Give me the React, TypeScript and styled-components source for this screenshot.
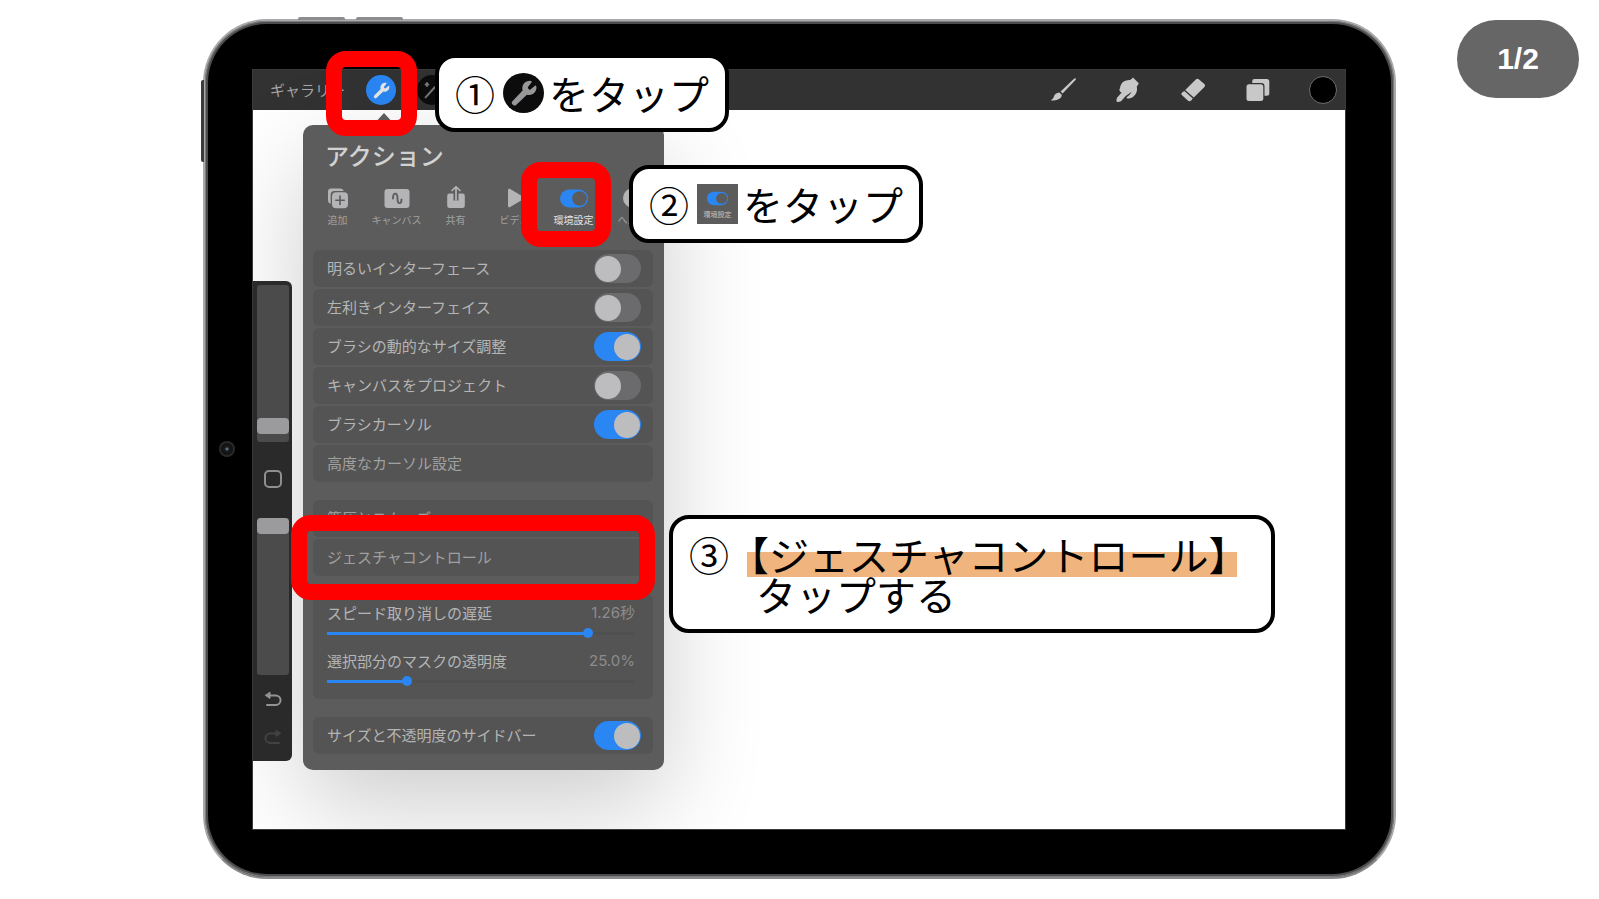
import React from "react";
import styled, { createGlobalStyle, css } from "styled-components";

const GlobalStyle = createGlobalStyle`
  *, *::before, *::after { box-sizing: border-box; }
  body {
    margin: 0;
    background: #fff;
    font-family: "Noto Sans CJK JP", sans-serif;
  }
  button { border: 0; padding: 0; margin: 0; background: none; font: inherit; color: inherit; }
`;

/* ---------- page and tablet ---------- */

const Page = styled.main`
  position: relative;
  min-width: 1500px;
  padding: 19px 203px 20px;
`;

const PageCounter = styled.div`
  position: absolute;
  top: 20px;
  right: 20px;
  width: 122px;
  height: 78px;
  border-radius: 39px;
  background: #666;
  color: #fff;
  font: bold 30px/78px "Liberation Sans", sans-serif;
  text-align: center;
`;

const Tablet = styled.section`
  position: relative;
  padding: 49px 49px 48px 48px;
  border: 2px solid #a9a9ab;
  border-bottom-color: #8a8a8c;
  border-radius: 64px;
  background: #000;
  box-shadow: inset 0 0 0 1px #7c7c7e, inset 0 0 0 3px #4c4c4e;
`;

const HardwareButton = styled.span<{ $side: "top" | "left"; $at: number }>`
  position: absolute;
  background: #8c8c8e;
  ${({ $side, $at }) =>
    $side === "top"
      ? css`
          top: -4px;
          left: ${$at}px;
          width: 47px;
          height: 3px;
          border-radius: 2px 2px 0 0;
        `
      : css`
          left: -4px;
          top: ${$at}px;
          width: 3px;
          height: 82px;
          background: #3c3c3e;
          border-radius: 2px 0 0 2px;
        `}
`;

const Camera = styled.span`
  position: absolute;
  left: 14px;
  top: 420px;
  width: 16px;
  height: 16px;
  border-radius: 50%;
  background: radial-gradient(circle, #5a7080 0 1px, #1d1d1f 2px, #111 5px, #2b2b2d 7px);
`;

const ScreenArea = styled.div`
  position: relative;
`;

const Screen = styled.div`
  background: #fff;
  overflow: hidden;
  box-shadow: 0 0 0 1px #3a3a3a;
`;

/* ---------- top bar ---------- */

const TopBar = styled.header`
  display: flex;
  justify-content: space-between;
  align-items: center;
  height: 40px;
  padding: 0 8px 0 17px;
  background: #323232;
`;

const ToolGroup = styled.div<{ $gap: number }>`
  display: flex;
  align-items: center;
  gap: ${({ $gap }) => $gap}px;
`;

const GalleryButton = styled.button`
  font-size: 15px;
  line-height: 24px;
  color: #a6a6a6;
`;

const RoundTool = styled.button<{ $color: string }>`
  display: grid;
  place-items: center;
  width: 30px;
  height: 30px;
  border-radius: 50%;
  background: ${({ $color }) => $color};
  color: #e6e6e6;
`;

const ToolButton = styled.button`
  display: grid;
  place-items: center;
  width: 28px;
  height: 28px;
  color: #c8c8c8;
`;

const ColorWell = styled(ToolButton)`
  border-radius: 50%;
  border: 1px solid #6e6e6e;
  background: #000;
`;

/* ---------- canvas, side bar ---------- */

const Canvas = styled.div`
  display: flex;
  align-items: flex-start;
  gap: 11px;
  padding-bottom: 59px;
`;

const SideBar = styled.aside`
  display: flex;
  flex-direction: column;
  align-items: center;
  width: 39px;
  height: 480px;
  margin-top: 171px;
  padding-top: 4px;
  border-radius: 0 6px 6px 0;
  background: #2a2a2a;
  position: relative;
  z-index: 1;
`;

const VerticalSlider = styled.input`
  appearance: none;
  writing-mode: vertical-lr;
  direction: rtl;
  width: 32px;
  height: 157px;
  margin: 0;
  border-radius: 3px;
  background: #4b4b4b;
  &::-webkit-slider-thumb {
    appearance: none;
    width: 32px;
    height: 16px;
    border-radius: 4px;
    background: #9b9b9d;
  }
`;

const ModifyButton = styled.button`
  width: 18px;
  height: 18px;
  margin: 28px 0 30px;
  border: 2px solid #8f8f8f;
  border-radius: 5px;
`;

const History = styled.div`
  display: flex;
  flex-direction: column;
  margin-top: 5px;
`;

const HistoryButton = styled.button<{ $dim?: boolean }>`
  display: grid;
  place-items: center;
  width: 30px;
  height: 38px;
  color: ${({ $dim }) => ($dim ? "#424242" : "#949494")};
`;

/* ---------- actions popover ---------- */

const Popover = styled.section`
  position: relative;
  width: 361px;
  margin-top: 15px;
  padding: 14px 11px 16px 10px;
  border-radius: 10px;
  background: #5c5c5c;
  box-shadow: 0 36px 100px rgba(0, 0, 0, 0.2);
  &::before {
    content: "";
    position: absolute;
    top: -12px;
    left: 70px;
    border: 11px solid transparent;
    border-top: 0;
    border-bottom: 12px solid #5c5c5c;
  }
`;

const Title = styled.h1`
  margin: 0 0 15px;
  padding-left: 12px;
  font-size: 24px;
  line-height: 32px;
  font-weight: 500;
  color: #d2d2d2;
`;

const Tabs = styled.nav`
  display: grid;
  grid-template-columns: repeat(6, 59px);
  justify-content: center;
  margin: 0 -11px 23px -7px;
`;

const Tab = styled.button<{ $active?: boolean }>`
  display: flex;
  flex-direction: column;
  align-items: center;
  gap: 3px;
  font-size: 10px;
  line-height: 14px;
  white-space: nowrap;
  color: ${({ $active }) => ($active ? "#e4e4e4" : "#a0a0a0")};
  svg { color: #b4b4b6; }
`;

const Groups = styled.div`
  display: flex;
  flex-direction: column;
  gap: 18px;
`;

const Group = styled.div`
  display: flex;
  flex-direction: column;
  gap: 2px;
`;

const rowSurface = css`
  border-radius: 6px;
  background: #545454;
  font-size: 15px;
  color: #b4b4b4;
`;

const ToggleRow = styled.label`
  ${rowSurface}
  display: flex;
  align-items: center;
  justify-content: space-between;
  height: 37px;
  padding: 0 12px 0 14px;
`;

const ToggleLabel = styled.span`
  padding-bottom: 2px;
`;

const LinkRow = styled.button`
  ${rowSurface}
  height: 37px;
  padding: 0 14px 2px;
  text-align: left;
  color: #a0a0a0;
`;

const Switch = styled.input`
  appearance: none;
  display: flex;
  align-items: center;
  width: 47px;
  height: 29px;
  margin: 0;
  padding: 0 1px;
  border-radius: 15px;
  background: #6b6b6d;
  &::before {
    content: "";
    width: 26px;
    height: 26px;
    border-radius: 50%;
    background: #bdbdbf;
  }
  &:checked { background: #2a86f3; justify-content: flex-end; }
`;

const SliderCard = styled.div`
  ${rowSurface}
  display: flex;
  flex-direction: column;
  gap: 4px;
  height: 105px;
  padding: 7px 18px 0 14px;
`;

const SliderField = styled.label`
  display: grid;
  grid-template-columns: 1fr auto;
  align-content: start;
  row-gap: 2px;
  height: 44px;
  line-height: 24px;
`;

const SliderValue = styled.output`
  font-family: Inter, "Noto Sans CJK JP", sans-serif;
  color: #8c8c8c;
`;

const Slider = styled.input`
  appearance: none;
  grid-column: 1 / -1;
  width: 100%;
  height: 12px;
  margin: 0;
  background: linear-gradient(
      to right,
      #2a86f3 var(--fill),
      #505050 var(--fill)
    )
    center / 100% 3px no-repeat;
  &::-webkit-slider-thumb {
    appearance: none;
    width: 10px;
    height: 10px;
    border-radius: 50%;
    background: #2a86f3;
  }
`;

/* ---------- annotations lying over the screen ---------- */

const Highlight = styled.div<{ $x: number; $y: number; $w: number }>`
  position: absolute;
  z-index: 2;
  left: ${({ $x }) => $x}px;
  top: ${({ $y }) => $y}px;
  width: ${({ $w }) => $w}px;
  height: 85px;
  border: 16px solid #f00;
  border-radius: 20px;
  pointer-events: none;
`;

const Callout = styled.div<{ $x: number; $y: number }>`
  position: absolute;
  z-index: 3;
  left: ${({ $x }) => $x}px;
  top: ${({ $y }) => $y}px;
  padding: 15px 16px;
  border: 4px solid #000;
  border-radius: 20px;
  background: #fff;
  color: #000;
  font-size: 40px;
  line-height: 40px;
  white-space: nowrap;
`;

const StepLine = styled.p`
  display: flex;
  align-items: center;
  width: 254px;
  margin: 0;
`;

const WideStep = styled.p`
  display: grid;
  grid-template-columns: 40px 1fr;
  width: 566px;
  margin: 0;
`;

const Marked = styled.span`
  background: linear-gradient(#f0b47e, #f0b47e) 18px 18px / 490px 25px no-repeat;
  margin-bottom: -4px;
  padding-bottom: 4px;
`;

const SecondLine = styled.span`
  grid-column: 2;
  padding-left: 27px;
`;

const WrenchBadge = styled.span`
  display: grid;
  place-items: center;
  width: 42px;
  height: 40px;
  margin: 0 5px 0 8px;
  border-radius: 50%;
  background: #0c0c0c;
  color: #98989a;
`;

const SettingsTile = styled.span`
  display: flex;
  flex-direction: column;
  align-items: center;
  justify-content: center;
  gap: 2px;
  width: 42px;
  height: 40px;
  margin: 0 5px 0 8px;
  background: #5c5c5c;
  color: #c4c4c4;
  font-size: 7px;
  line-height: 10px;
`;

/* ---------- icons ---------- */

const WrenchIcon = ({ size }: { size: number }) => (
  <svg width={size} height={size} viewBox="0 0 24 24" fill="currentColor">
    <path d="M15.2 7.2a1 1 0 0 0 0 1l.9 1a1 1 0 0 0 1 0l3.7-3c.5-.3 1 0 1.1.5a6 6 0 0 1-7.6 6.7l-8.4 7.9a2 2 0 0 1-3-3l8-8.3a6 6 0 0 1 6.7-7.7c.5.1.8.6.5 1.1z" />
  </svg>
);

const WandIcon = () => (
  <svg width="22" height="22" viewBox="0 0 24 24" fill="none" stroke="#777" strokeWidth="2.2" strokeLinecap="round">
    <path d="M5 20L15 9M6.500 4.500v3M5 6h3M18 3v3M19 15v3" />
  </svg>
);

const BrushIcon = () => (
  <svg width="28" height="26" viewBox="0 0 28 26" fill="currentColor">
    <path d="M26.600 1.400c.5.4.3 1-.1 1.500L13.600 16.400l-2-1.900L25 1.700c.5-.4 1.100-.7 1.600-.3z" />
    <path d="M10.400 15.600l2.300 2.200c.4 2.100-1.400 4-4.300 5-2.300.8-4.700.9-6.700.4 1.900-.8 2.500-1.600 3.100-3.400.8-2.300 2.700-4 5.600-4.200z" />
  </svg>
);

const SmudgeIcon = () => (
  <svg width="26" height="26" viewBox="0 0 26 26" fill="currentColor">
    <path d="M17.200 1.200c.5-.5 1-.5 1.500 0l4.600 4.500c.5.500.5 1 .1 1.500l-1.600 2.200c.9 3.800-.3 7.700-3.300 10-1.700 1.400-3.700 2-5.600 2.200-1.200.1-1.700-1.200-.7-1.900 2-1.300 3.400-2.800 4.300-5-2 1.600-3.700 3-5.800 4.300l-4 4.600c-1 1.200-2.400 1.600-4.200 1.400-.9-.1-1-.6-1-1.500 0-1.400.3-2.400 1.200-3.400l4-4.500c-2.200-.6-2.800-2.500-1.800-4.300C5.500 7.600 7 5 9.700 3.900c2-.8 3.900-.9 6-1.200z" />
  </svg>
);

const EraserIcon = () => (
  <svg width="26" height="26" viewBox="0 0 26 26" fill="currentColor">
    <path d="M15.800 2.400c1-1 2.300-1 3.300 0l5.200 4.500c1 .9 1 2 .1 3.100L13.800 20.600 5.200 12.900z" />
    <path d="M4.300 13.900l8.500 7.700-1.600 1.800c-1 1-2.400 1-3.400.1l-5.700-5.200c-1-.9-1-2 0-2.900z" />
  </svg>
);

const LayersIcon = () => (
  <svg width="26" height="26" viewBox="0 0 26 26" fill="currentColor">
    <path d="M9.500 2h12.300A2.500 2.500 0 0 1 24.300 4.500v11.700a2.500 2.500 0 0 1-2.500 2.500h-2.300V9.300A3.300 3.300 0 0 0 16.200 6H7.200V4.300A2.300 2.300 0 0 1 9.500 2z" />
    <rect x="1.500" y="7.200" width="16.800" height="16.800" rx="2.500" />
  </svg>
);

const AddIcon = () => (
  <svg width="24" height="24" viewBox="0 0 24 24" fill="currentColor">
    <path d="M5 2.500h9.500A3.500 3.500 0 0 1 17.800 5H8.500A3.800 3.800 0 0 0 4.700 8.800v9A3.500 3.500 0 0 1 2 14.500v-9a3 3 0 0 1 3-3z" />
    <rect x="6" y="6.200" width="16" height="16" rx="4" />
    <path d="M14 10v8.500M9.800 14.200h8.500" stroke="#5c5c5c" strokeWidth="1.600" strokeLinecap="round" />
  </svg>
);

const CanvasIcon = () => (
  <svg width="26" height="24" viewBox="0 0 26 24">
    <rect x=".5" y="3" width="25" height="19" rx="3" fill="currentColor" />
    <path d="M9 12.500c0-6.500 4.500-6.500 4.500 0s4 5.500 4 1" fill="none" stroke="#5c5c5c" strokeWidth="1.900" strokeLinecap="round" />
  </svg>
);

const ShareIcon = () => (
  <svg width="24" height="24" viewBox="0 0 24 24">
    <path d="M5.500 7.500h4v7h5v-7h4a2.300 2.300 0 0 1 2.300 2.300v9.900a2.300 2.300 0 0 1-2.300 2.300h-13a2.300 2.300 0 0 1-2.300-2.300V9.800a2.300 2.300 0 0 1 2.300-2.300z" fill="currentColor" />
    <path d="M12 14V1M8 4.500L12 .8l4 3.700" fill="none" stroke="currentColor" strokeWidth="1.700" strokeLinecap="round" strokeLinejoin="round" />
  </svg>
);

const VideoIcon = () => (
  <svg width="24" height="24" viewBox="0 0 24 24" fill="currentColor">
    <path d="M5 4.200c0-1.400 1-1.900 2.200-1.200l13 7.800c1.100.7 1.100 1.700 0 2.400l-13 7.800C6 21.700 5 21.200 5 19.800z" />
  </svg>
);

const SettingsIcon = ({ width }: { width: number }) => (
  <svg width={width} height={(width * 6) / 7} viewBox="0 0 28 24">
    <rect x="0" y="3.500" width="28" height="18" rx="9" fill="#2a86f3" />
    <circle cx="19.500" cy="12.500" r="7.300" fill="#5c5c5c" />
  </svg>
);

const HelpIcon = () => (
  <svg width="24" height="24" viewBox="0 0 24 24">
    <circle cx="12" cy="12" r="10" fill="currentColor" />
    <path d="M9 9.500c0-4 6-4 6 0 0 2.300-3 2-3 4.500M12 17v.5" fill="none" stroke="#5c5c5c" strokeWidth="1.800" strokeLinecap="round" />
  </svg>
);

const UndoIcon = ({ flip }: { flip?: boolean }) => (
  <svg width="18" height="16" viewBox="0 0 18 16" fill="none" stroke="currentColor" strokeWidth="2" strokeLinecap="round">
    <g transform={flip ? "matrix(-1 0 0 1 18 0)" : undefined}>
      <path d="M5 4.500h6.800a4.700 4.700 0 0 1 0 9.500H3" />
      <path d="M6 1.500v6L1.500 4.500z" fill="currentColor" strokeWidth="1" strokeLinejoin="round" />
    </g>
  </svg>
);

/* ---------- pieces ---------- */

const Toggle = ({ label, on }: { label: string; on?: boolean }) => (
  <ToggleRow>
    <ToggleLabel>{label}</ToggleLabel>
    <Switch type="checkbox" role="switch" defaultChecked={on} />
  </ToggleRow>
);

const ValueSlider = ({ label, value, initial }: { label: string; value: string; initial: number }) => {
  const [level, setLevel] = React.useState(initial);
  return (
    <SliderField>
      <span>{label}</span>
      <SliderValue>{value}</SliderValue>
      <Slider
        type="range"
        value={level}
        onChange={(e) => setLevel(Number(e.target.value))}
        style={{ "--fill": `${level}%` } as React.CSSProperties}
      />
    </SliderField>
  );
};

export default function App() {
  return (
    <>
      <GlobalStyle />
      <Page>
        <Tablet>
          <HardwareButton $side="top" $at={93} />
          <HardwareButton $side="top" $at={151} />
          <HardwareButton $side="left" $at={59} />
          <Camera />
          <ScreenArea>
            <Screen>
              <TopBar>
                <ToolGroup $gap={21}>
                  <GalleryButton>ギャラリー</GalleryButton>
                  <RoundTool $color="#2a86f3" aria-label="アクション">
                    <WrenchIcon size={19} />
                  </RoundTool>
                  <RoundTool $color="#0c0c0c" aria-label="調整">
                    <WandIcon />
                  </RoundTool>
                </ToolGroup>
                <ToolGroup $gap={37}>
                  <ToolButton aria-label="ブラシ"><BrushIcon /></ToolButton>
                  <ToolButton aria-label="ぼかし"><SmudgeIcon /></ToolButton>
                  <ToolButton aria-label="消しゴム"><EraserIcon /></ToolButton>
                  <ToolButton aria-label="レイヤー"><LayersIcon /></ToolButton>
                  <ColorWell aria-label="カラー" />
                </ToolGroup>
              </TopBar>
              <Canvas>
                <SideBar>
                  <VerticalSlider type="range" defaultValue={6} aria-label="ブラシサイズ" />
                  <ModifyButton aria-label="修正" />
                  <VerticalSlider type="range" defaultValue={100} aria-label="不透明度" />
                  <History>
                    <HistoryButton aria-label="取り消す"><UndoIcon /></HistoryButton>
                    <HistoryButton $dim aria-label="やり直す"><UndoIcon flip /></HistoryButton>
                  </History>
                </SideBar>
                <Popover>
                  <Title>アクション</Title>
                  <Tabs>
                    <Tab><AddIcon />追加</Tab>
                    <Tab><CanvasIcon />キャンバス</Tab>
                    <Tab><ShareIcon />共有</Tab>
                    <Tab><VideoIcon />ビデオ</Tab>
                    <Tab $active><SettingsIcon width={28} />環境設定</Tab>
                    <Tab><HelpIcon />ヘルプ</Tab>
                  </Tabs>
                  <Groups>
                    <Group>
                      <Toggle label="明るいインターフェース" />
                      <Toggle label="左利きインターフェイス" />
                      <Toggle label="ブラシの動的なサイズ調整" on />
                      <Toggle label="キャンバスをプロジェクト" />
                      <Toggle label="ブラシカーソル" on />
                      <LinkRow>高度なカーソル設定</LinkRow>
                    </Group>
                    <Group>
                      <LinkRow>筆圧とスムーズ</LinkRow>
                      <LinkRow>ジェスチャコントロール</LinkRow>
                    </Group>
                    <SliderCard>
                      <ValueSlider label="スピード取り消しの遅延" value="1.26秒" initial={86} />
                      <ValueSlider label="選択部分のマスクの透明度" value="25.0%" initial={25} />
                    </SliderCard>
                    <Toggle label="サイズと不透明度のサイドバー" on />
                  </Groups>
                </Popover>
              </Canvas>
            </Screen>

            <Highlight $x={73} $y={-19} $w={91} />
            <Highlight $x={268} $y={92} $w={90} />
            <Highlight $x={38} $y={445} $w={364} />

            <Callout $x={182} $y={-16}>
              <StepLine>
                ①<WrenchBadge><WrenchIcon size={30} /></WrenchBadge>をタップ
              </StepLine>
            </Callout>
            <Callout $x={376} $y={95}>
              <StepLine>
                ②<SettingsTile><SettingsIcon width={21} />環境設定</SettingsTile>をタップ
              </StepLine>
            </Callout>
            <Callout $x={416} $y={445}>
              <WideStep>
                <span>③</span>
                <Marked>【ジェスチャコントロール】</Marked>
                <SecondLine>タップする</SecondLine>
              </WideStep>
            </Callout>
          </ScreenArea>
        </Tablet>
        <PageCounter>1/2</PageCounter>
      </Page>
    </>
  );
}
